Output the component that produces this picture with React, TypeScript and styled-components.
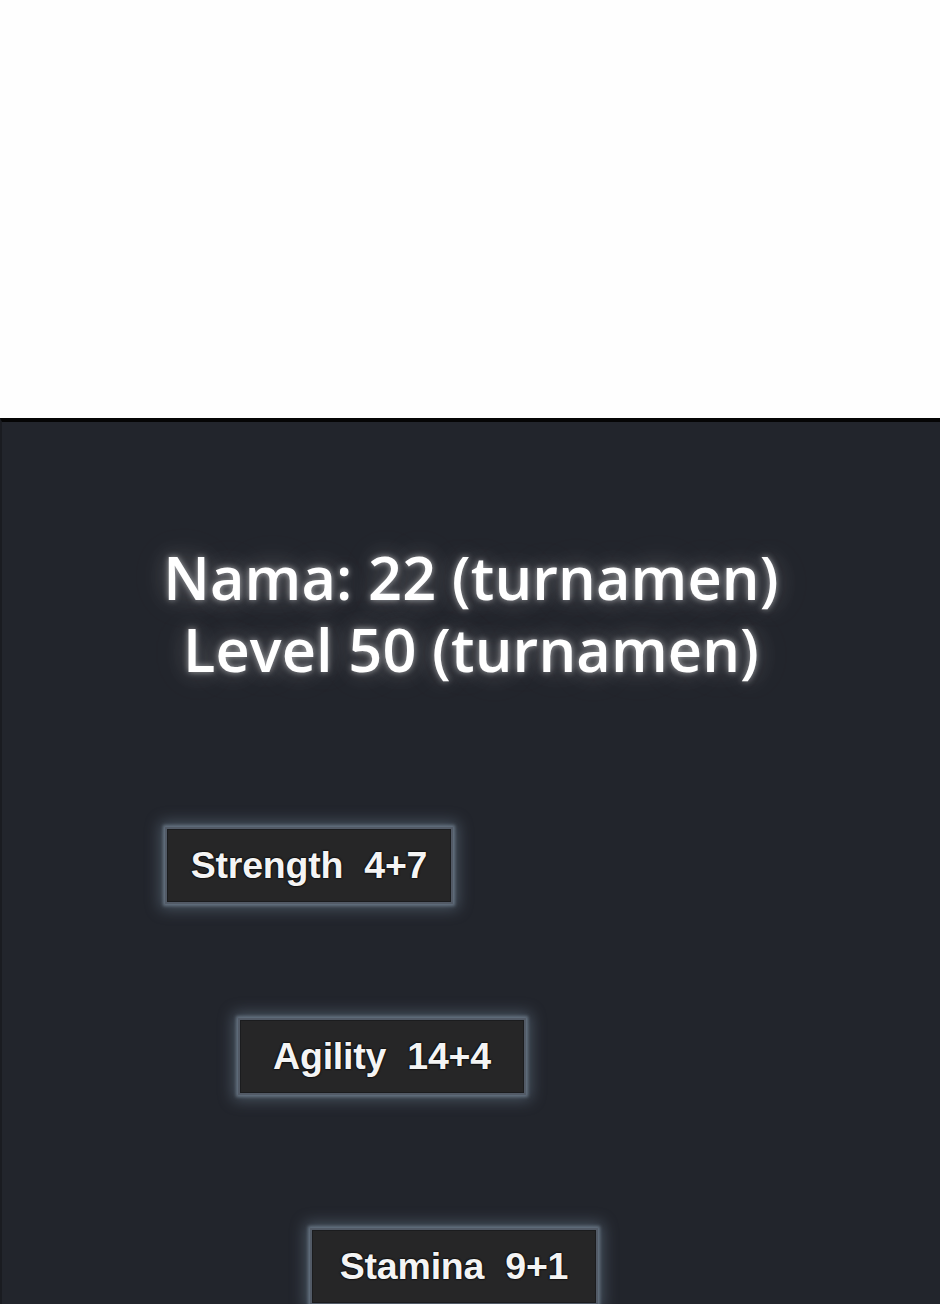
import React from "react";
import styled, { createGlobalStyle } from "styled-components";

const Global = createGlobalStyle`
  html, body { margin: 0; padding: 0; background: #ffffff; }
  body { width: 940px; height: 1304px; overflow: hidden; }
`;

const Page = styled.div`
  width: 940px;
  display: flex;
  flex-direction: column;
`;

const Blank = styled.div`
  height: 418px;
  background: #fefefe;
`;

const Panel = styled.section`
  min-height: 900px;
  background: #22252c;
  border-top: 4px solid #050505;
  border-left: 2px solid #1a1c21;
  display: flex;
  flex-direction: column;
  padding-top: 119px;
`;

const Title = styled.h1`
  margin: 0;
  font-family: "Open Sans", "Noto Sans", sans-serif;
  font-weight: 600;
  font-size: 59.5px;
  line-height: 72px;
  letter-spacing: 0.1px;
  color: #ffffff;
  text-align: center;
  text-shadow: 0 0 6px rgba(255, 255, 255, 0.55), 0 0 22px rgba(255, 255, 255, 0.25),
    0 0 40px rgba(255, 240, 235, 0.15);
`;

const Stats = styled.div`
  display: flex;
  flex-direction: column;
`;

const StatBox = styled.div<{ $indent: number; $top: number }>`
  margin-left: ${(p) => p.$indent}px;
  margin-top: ${(p) => p.$top}px;
  width: 284px;
  height: 73px;
  box-sizing: content-box;
  background: #262627;
  border: 2px solid #525a66;
  box-shadow: 0 0 3px 2px rgba(110, 125, 140, 0.8), 0 0 14px 5px rgba(120, 140, 160, 0.45),
    inset 0 0 0 1px #1b1c1e;
  display: flex;
  align-items: center;
  justify-content: center;
  gap: 21px;
  font-family: "Liberation Sans", Arial, sans-serif;
  font-weight: 700;
  font-size: 37.5px;
  letter-spacing: -0.2px;
  color: #f4f4f4;
  text-shadow: 0 0 2px #000, 0 0 2px #000;
`;

const stats = [
  { label: "Strength", value: "4+7", indent: 163, top: 142 },
  { label: "Agility", value: "14+4", indent: 236, top: 114 },
  { label: "Stamina", value: "9+1", indent: 308, top: 133 },
];

export default function App() {
  return (
    <>
      <Global />
      <Page>
        <Blank />
        <Panel>
          <Title>
            Nama: 22 (turnamen)
            <br />
            Level 50 (turnamen)
          </Title>
          <Stats>
            {stats.map((s) => (
              <StatBox key={s.label} $indent={s.indent} $top={s.top}>
                <span>{s.label}</span>
                <span>{s.value}</span>
              </StatBox>
            ))}
          </Stats>
        </Panel>
      </Page>
    </>
  );
}
